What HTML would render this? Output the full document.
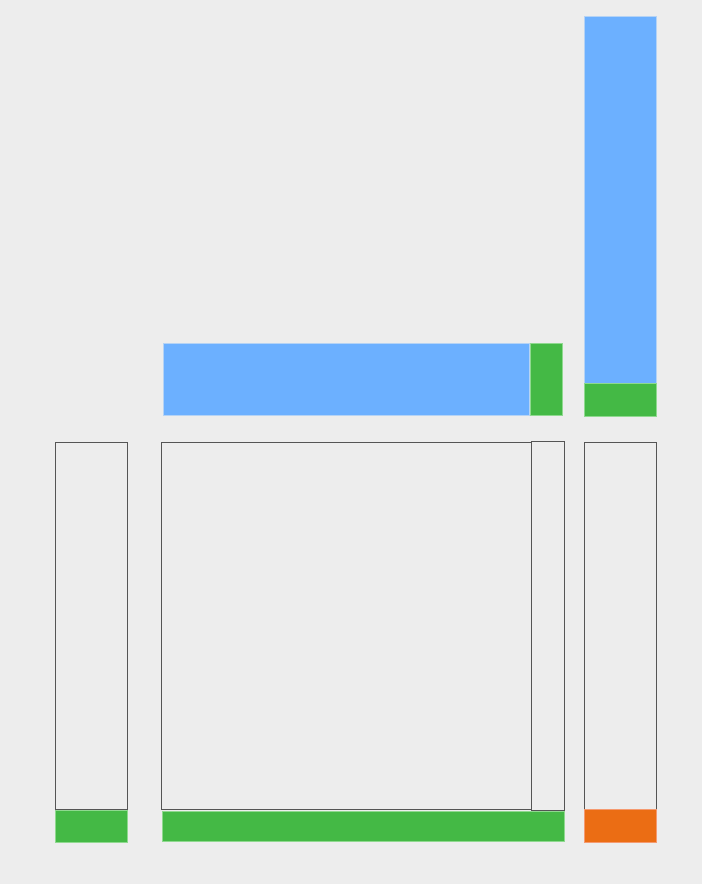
<!DOCTYPE html>
<html><head><style>
body{margin:0;width:702px;height:884px;background:#ededed;position:relative;overflow:hidden}
div{position:absolute;box-sizing:border-box}
.b{background:#6cb0ff;border:1px solid #b5d3f5}
.g{background:#44b945;border:1px solid #8fd98f}
.o{background:#eb6d14;border:1px solid #f59a70}
.w{border:1px solid #555}
</style></head><body>
<div class="b" style="left:163px;top:343px;width:367px;height:73px"></div>
<div class="g" style="left:530px;top:343px;width:33px;height:73px"></div>
<div class="b" style="left:584px;top:16px;width:73px;height:368px"></div>
<div class="g" style="left:584px;top:383px;width:73px;height:34px"></div>
<div class="w" style="left:55px;top:442px;width:73px;height:368px"></div>
<div class="g" style="left:55px;top:810px;width:73px;height:33px"></div>
<div class="w" style="left:161px;top:442px;width:371px;height:368px"></div>
<div class="w" style="left:531px;top:441px;width:34px;height:370px"></div>
<div class="g" style="left:162px;top:811px;width:403px;height:31px"></div>
<div class="w" style="left:584px;top:442px;width:73px;height:368px"></div>
<div class="o" style="left:584px;top:809px;width:73px;height:34px"></div>
</body></html>
